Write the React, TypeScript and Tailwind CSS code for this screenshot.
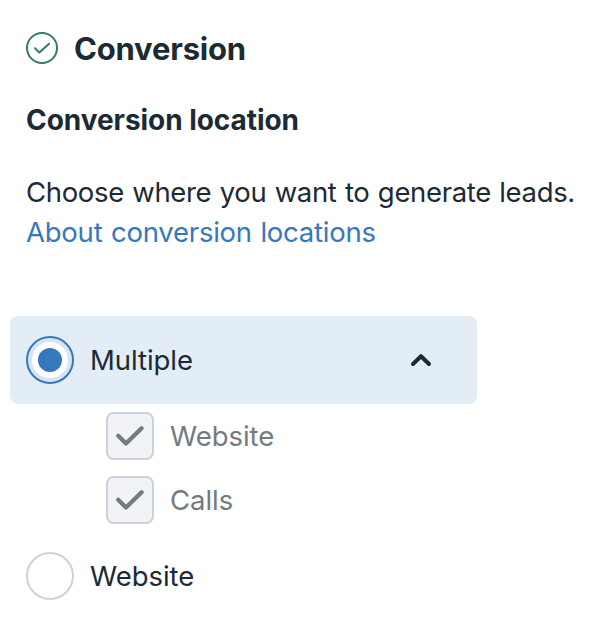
import React from 'react';

interface CheckRowProps {
  label: string;
}

const CheckRow: React.FC<CheckRowProps> = ({ label }) => {
  return (
    <label className="flex items-center gap-4 h-12">
      <span className="flex items-center justify-center w-12 h-12 rounded-lg border-2 border-[#cbd2d9] bg-[#f1f3f7]">
        <svg width="32" height="24" viewBox="0 0 32 24" fill="none">
          <path d="M4.2 11.8L12 19.6L27.6 4.2" stroke="#737b7f" strokeWidth="4.2" strokeLinecap="round" strokeLinejoin="round" />
        </svg>
      </span>
      <span className="text-[27.5px] leading-10 tracking-[-0.05px] text-[#737b7f]">{label}</span>
    </label>
  );
};

const App: React.FC = () => {
  return (
    <div className="w-[592px] h-[632px] overflow-hidden bg-white px-[26px] pt-7 text-[#1c2b33] font-['Inter',sans-serif]">
      <div className="flex items-center gap-4 h-10">
        <svg width="32" height="32" viewBox="0 0 32 32" fill="none" stroke="#317f58" strokeWidth="2">
          <circle cx="16" cy="16" r="15" />
          <path d="M9 16.3L13.4 20.6L23 11.8" strokeLinecap="round" strokeLinejoin="round" />
        </svg>
        <h1 className="pt-0.5 text-[31px] leading-10 font-bold tracking-[-0.2px] whitespace-nowrap">Conversion</h1>
      </div>

      <h2 className="mt-8 text-[28px] leading-10 font-bold tracking-[-0.05px] whitespace-nowrap">Conversion location</h2>

      <p className="mt-8 text-[27.5px] leading-10 tracking-[-0.34px] [word-spacing:1px] whitespace-nowrap">Choose where you want to generate leads.</p>
      <a href="#" className="block text-[27.5px] leading-10 tracking-[-0.23px] [word-spacing:1px] whitespace-nowrap text-[#3578bc]">About conversion locations</a>

      <div className="-ml-4 mt-16 flex items-center gap-4 w-[467px] h-[88px] rounded-lg bg-[#e2edf6] pl-4 pr-11">
        <span className="flex items-center justify-center w-12 h-12 rounded-full border-2 border-[#3578bc] bg-[#d8e4f2]">
          <span className="flex items-center justify-center w-9 h-9 rounded-full bg-white">
            <span className="w-6 h-6 rounded-full bg-[#3578bc]" />
          </span>
        </span>
        <span className="flex-1 text-[27.5px] leading-10 tracking-[-0.05px]">Multiple</span>
        <svg width="24" height="16" viewBox="0 0 24 16" fill="none">
          <path d="M4 12L12 4.2L20 12" stroke="#1c2b33" strokeWidth="4" strokeLinecap="round" strokeLinejoin="round" />
        </svg>
      </div>

      <div className="ml-20 mt-2 flex flex-col gap-4">
        <CheckRow label="Website" />
        <CheckRow label="Calls" />
      </div>

      <label className="mt-7 flex items-center gap-4 h-12">
        <span className="w-12 h-12 rounded-full border-2 border-[#cbd2d9] bg-white" />
        <span className="text-[27.5px] leading-10 tracking-[-0.05px]">Website</span>
      </label>
    </div>
  );
};

export default App;
